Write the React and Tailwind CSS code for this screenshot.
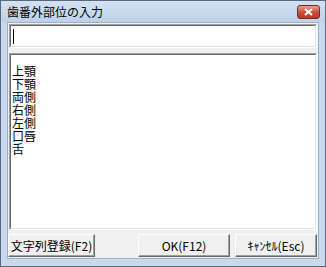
export default function App() {
  const lines = ["上顎", "下顎", "両側", "右側", "左側", "口唇", "舌"];
  const font = { fontFamily: '"Noto Sans CJK JP", "Liberation Sans", sans-serif' };
  const sunken =
    "border-t-[#a0a0a0] border-l-[#a0a0a0] border-b-white border-r-white border";
  const btn =
    "h-[23px] flex items-center justify-center whitespace-nowrap text-[12px] text-black bg-[#f0f0f0] border border-t-white border-l-white border-r-[#696969] border-b-[#696969] shadow-[inset_-1px_-1px_0_#a0a0a0]";
  return (
    <div className="w-[326px] h-[267px] bg-[#c6d9ee] border border-[#5a6a7c] flex flex-col" style={font}>
      <div className="h-[21px] flex items-center justify-between pl-[6px] pr-[5px] bg-gradient-to-b from-[#d3e2f3] to-[#bcd2ea]">
        <span className="text-[12px] leading-none text-black">歯番外部位の入力</span>
        <div className="w-[23px] h-[14px] rounded-[3px] border border-[#7a2a22] bg-gradient-to-b from-[#e8a093] via-[#c9503c] to-[#b63a26] flex items-center justify-center">
          <svg width="9" height="8" viewBox="0 0 9 8">
            <path d="M1 1 L8 7 M8 1 L1 7" stroke="white" strokeWidth="2" />
          </svg>
        </div>
      </div>
      <div className="flex-1 flex flex-col mx-[6px] mb-[7px] bg-[#f0f0f0] border border-[#9fb1c6] px-[1px] pt-[1px]">
        <div className={`h-[24px] ${sunken} bg-white`}>
          <div className="h-full border border-t-[#696969] border-l-[#696969] border-b-[#e3e3e3] border-r-[#e3e3e3] flex items-center pl-[2px]">
            <div className="w-[1px] h-[15px] bg-black" />
          </div>
        </div>
        <div className={`mt-[5px] h-[177px] ${sunken} bg-white`}>
          <div className="h-full border border-t-[#696969] border-l-[#696969] border-b-[#e3e3e3] border-r-[#e3e3e3] pt-[9px] pl-[1px]">
            <div className="text-[12px] leading-[13px] whitespace-pre-line text-black">{lines.join("\n")}</div>
          </div>
        </div>
        <div className="flex mt-[4px] items-center">
          <div className={`${btn} w-[87px] ml-[-1px]`}>文字列登録(F2)</div>
          <div className={`${btn} w-[92px] ml-[43px]`}>OK(F12)</div>
          <div className={`${btn} w-[82px] ml-[5px]`}>ｷｬﾝｾﾙ(Esc)</div>
        </div>
      </div>
    </div>
  );
}
